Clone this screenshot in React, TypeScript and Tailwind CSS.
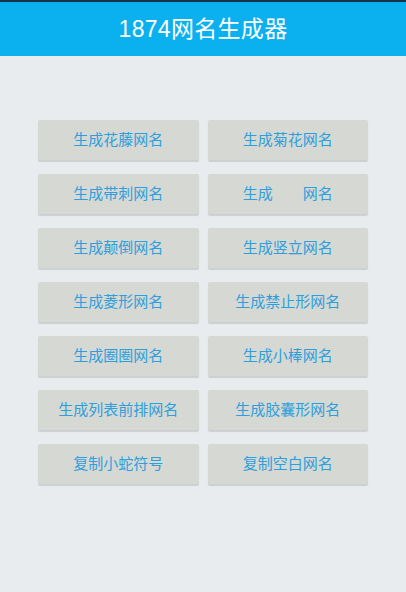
const font = { fontFamily: '"Liberation Sans", "Noto Sans CJK SC", sans-serif' };

const buttons = [
  "生成花藤网名",
  "生成菊花网名",
  "生成带刺网名",
  "生成\u3000\u3000网名",
  "生成颠倒网名",
  "生成竖立网名",
  "生成菱形网名",
  "生成禁止形网名",
  "生成圈圈网名",
  "生成小棒网名",
  "生成列表前排网名",
  "生成胶囊形网名",
  "复制小蛇符号",
  "复制空白网名",
];

export default function App() {
  return (
    <div className="w-[406px] h-[592px] bg-[#e9ecef] flex flex-col" style={font}>
      <div className="h-[2px] bg-[#17324d]" />
      <header className="h-[54px] bg-[#0bb0ef] flex items-center justify-center">
        <h1 className="text-[23px] text-white tracking-[0.3px]">1874网名生成器</h1>
      </header>
      <main className="px-[38px] pt-[64px]">
        <div className="grid grid-cols-2 gap-x-[9px] gap-y-[14px]">
          {buttons.map((label, i) => (
            <button
              key={i}
              className="h-[40px] rounded-[2px] bg-[#d5d8d3] shadow-[0_2px_1px_rgba(0,0,0,0.12)] text-[15px] text-[#2f9fdc] flex items-center justify-center whitespace-pre"
            >
              {label}
            </button>
          ))}
        </div>
      </main>
    </div>
  );
}
